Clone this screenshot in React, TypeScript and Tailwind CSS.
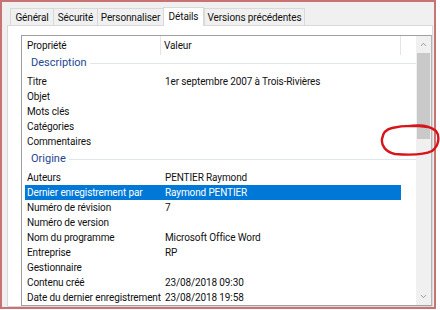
import { ChevronUp, ChevronDown } from "lucide-react";

type Row = { name: string; value: string; selected?: boolean };

const groups: { title: string; box: string; rows: Row[] }[] = [
  {
    title: "Description",
    box: "h-[19px] pt-[1px]",
    rows: [
      { name: "Titre", value: "1er septembre 2007 à Trois-Rivières" },
      { name: "Objet", value: "" },
      { name: "Mots clés", value: "" },
      { name: "Catégories", value: "" },
      { name: "Commentaires", value: "" },
    ],
  },
  {
    title: "Origine",
    box: "h-[21px] pt-[3px]",
    rows: [
      { name: "Auteurs", value: "PENTIER Raymond" },
      { name: "Dernier enregistrement par", value: "Raymond PENTIER", selected: true },
      { name: "Numéro de révision", value: "7" },
      { name: "Numéro de version", value: "" },
      { name: "Nom du programme", value: "Microsoft Office Word" },
      { name: "Entreprise", value: "RP" },
      { name: "Gestionnaire", value: "" },
      { name: "Contenu créé", value: "23/08/2018 09:30" },
      { name: "Date du dernier enregistrement", value: "23/08/2018 19:58" },
    ],
  },
];

const tabs = [
  { label: "Général", w: "w-[43px]" },
  { label: "Sécurité", w: "w-[44px]" },
  { label: "Personnaliser", w: "w-[66px]" },
  { label: "Détails", w: "w-[41px]", active: true },
  { label: "Versions précédentes", w: "w-[101px]" },
];

const App = () => {
  return (
    <div className="relative w-[440px] h-[310px] overflow-hidden bg-white font-['Roboto','Liberation_Sans',sans-serif] text-[10px] tracking-[-0.12px] text-[#111]">
      {/* Window frame */}
      <div className="flex flex-col w-[436px] h-[309px] border-2 border-[#c87373] bg-[#f0f0f0]">
        {/* Tabs */}
        <div className="flex items-end h-[23px] pl-[8px] shrink-0">
          {tabs.map((t) =>
            t.active ? (
              <div
                key={t.label}
                className={`${t.w} relative z-10 -mb-px h-[19px] flex items-center justify-center bg-white border border-b-0 border-[#d9d9d9] pb-[2px]`}
              >
                {t.label}
              </div>
            ) : (
              <div
                key={t.label}
                className={`${t.w} h-[17px] flex items-center justify-center border border-b-0 border-r-0 last:border-r border-[#d9d9d9] bg-[#f0f0f0]`}
              >
                {t.label}
              </div>
            )
          )}
        </div>

        {/* Tab panel */}
        <div className="flex-1 ml-[5px] mr-px flex flex-col bg-white border border-[#d9d9d9] min-h-0">
          {/* List view */}
          <div className="flex-1 mt-[9px] ml-[13px] flex border border-[#a0a0a0] border-r-[#b5b5b5] min-h-0">
            <div className="flex-1 flex flex-col min-w-0">
              {/* Header */}
              <div className="flex h-[19px] shrink-0">
                <div className="w-[139px] pl-[5px] flex items-center border-r border-[#e5e5e5]">
                  Propriété
                </div>
                <div className="w-[240px] pl-[3px] flex items-center border-r border-[#e5e5e5]">
                  Valeur
                </div>
              </div>

              {groups.map((g) => (
                <div key={g.title} className="flex flex-col">
                  <div className={`${g.box} flex items-start shrink-0`}>
                    <div className="flex items-center h-[15px] w-[388px] ml-[9px]">
                      <span className="text-[11px] tracking-normal text-[#24478f]">{g.title}</span>
                      <div className="flex-1 h-px bg-[#e1e5ec] ml-[3px]" />
                    </div>
                  </div>
                  {g.rows.map((r) => (
                    <div
                      key={r.name}
                      className={`flex h-[15px] items-center ml-[3px] w-[376px] ${
                        r.selected ? "bg-[#0078d7] text-white" : ""
                      }`}
                    >
                      <div className="w-[136px] pl-[2px] whitespace-nowrap">{r.name}</div>
                      <div className="pl-[4px] whitespace-nowrap">{r.value}</div>
                    </div>
                  ))}
                </div>
              ))}
            </div>

            {/* Scrollbar */}
            <div className="w-[15px] flex flex-col bg-[#f0f0f0] shrink-0">
              <div className="h-[17px] flex items-center justify-center text-[#606060]">
                <ChevronUp size={9} strokeWidth={1.6} />
              </div>
              <div className="h-[86px] mx-px bg-[#c9c9c9]" />
              <div className="flex-1" />
              <div className="h-[17px] flex items-center justify-center text-[#606060]">
                <ChevronDown size={9} strokeWidth={1.6} />
              </div>
            </div>
          </div>
        </div>
      </div>

      {/* Hand-drawn red circle */}
      <svg
        className="absolute left-0 top-0 pointer-events-none"
        width="440"
        height="310"
        viewBox="0 0 440 310"
      >
        <path
          d="M412 126 C420 125 430 126 436 131 C440 136 439 146 432 151 C424 155 408 155 395 154 C386 152 381 146 382 139 C383 132 387 129 392 128 C400 126 412 125 428 127"
          fill="none"
          stroke="#d8141a"
          strokeWidth="2.4"
          strokeLinecap="round"
        />
      </svg>
    </div>
  );
};

export default App;
